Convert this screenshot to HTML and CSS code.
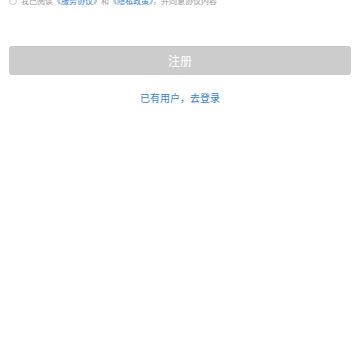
FILE: index.html
```html
<!DOCTYPE html>
<html lang="zh">
<head>
    <meta charset="UTF-8">
    <meta name="viewport" content="width=device-width, initial-scale=1.0">
    <title>注册</title>
    <link rel="stylesheet" href="styles.css">
</head>
<body>
    <div class="register">
        <label class="agreement">
            <span class="check"></span>
            <span class="agree-text">我已阅读<a href="#">《服务协议》</a>和<a href="#">《隐私政策》</a>，并同意协议内容</span>
        </label>
        <button class="submit" disabled>注册</button>
        <p class="login-link"><a href="#">已有用户，去登录</a></p>
    </div>
</body>
</html>
```

FILE: styles.css
```css
* {
    margin: 0;
    padding: 0;
    box-sizing: border-box;
}

body {
    font-family: "Noto Sans CJK SC", "Liberation Sans", sans-serif;
    background: #fff;
}

.register {
    display: flex;
    flex-direction: column;
}

.agreement {
    display: flex;
    align-items: center;
    gap: 4px;
    height: 10px;
    margin-top: -4px;
    padding-left: 9px;
}

.check {
    width: 8px;
    height: 8px;
    border: 1px solid #ccc;
    border-radius: 50%;
}

.agree-text {
    font-size: 8px;
    line-height: 10px;
    color: #999;
}

.agree-text a {
    color: #3a7fd0;
    text-decoration: none;
}

.submit {
    margin: 40px 9px 0;
    height: 29px;
    border: none;
    border-radius: 3px;
    background: #ccc;
    color: #fff;
    font-family: inherit;
    font-size: 12px;
}

.login-link {
    margin-top: 16px;
    text-align: center;
    font-size: 10px;
    line-height: 14px;
}

.login-link a {
    color: #3a7fd0;
    text-decoration: none;
}
```
